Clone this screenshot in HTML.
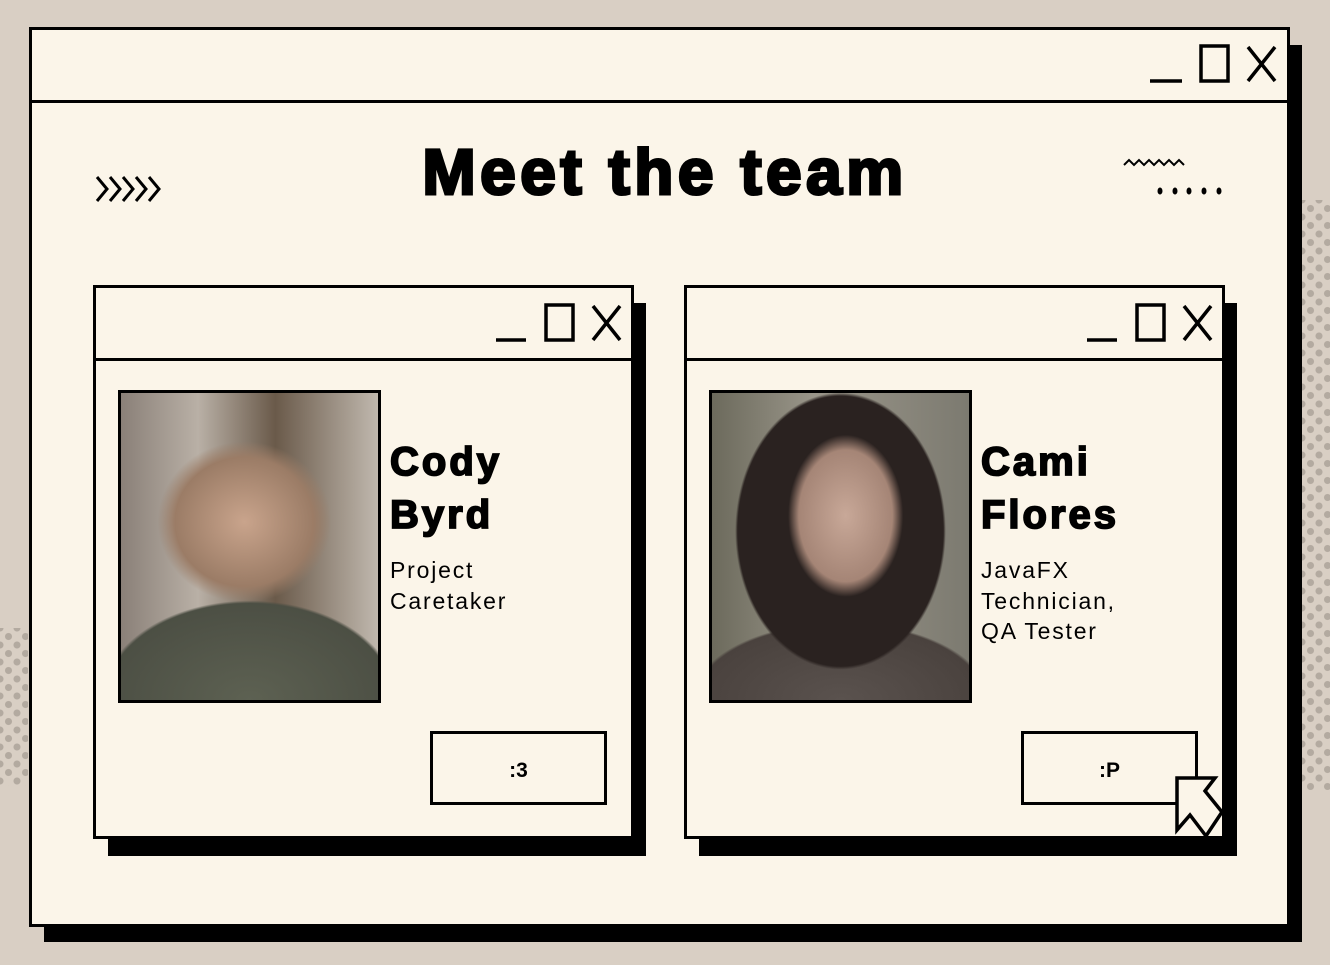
<!DOCTYPE html>
<html><head><style>
*{margin:0;padding:0;box-sizing:border-box}
body{width:1330px;height:965px;background:#d9cfc4;position:relative;overflow:hidden;font-family:"Liberation Sans",sans-serif;color:#000}
.dots{position:absolute;background-image:radial-gradient(circle,#b3aaa0 3.2px,transparent 3.8px),radial-gradient(circle,#b3aaa0 3.2px,transparent 3.8px);background-size:17px 17px;background-position:0 0,8.5px 8.5px}
.win{position:absolute;background:#fbf5e9;border:3px solid #000}
.sh{position:absolute;background:#000}
.bar{position:absolute;left:0;right:0;border-bottom:3px solid #000}
.title{position:absolute;left:0;width:100%;top:134px;text-align:center;font-weight:bold;font-size:64px;letter-spacing:4.5px;-webkit-text-stroke:3px #000;line-height:76px}
.name{position:absolute;font-weight:bold;font-size:40px;line-height:53px;-webkit-text-stroke:1.8px #000;letter-spacing:3px}
.role{position:absolute;font-size:23px;line-height:30.5px;letter-spacing:1.8px}
.photo{position:absolute;border:3px solid #000}
.btn{position:absolute;border:3px solid #000;background:#fbf5e9;font-weight:bold;font-size:21px;text-align:center;line-height:74px}
</style></head><body>
<div class="dots" style="left:1302px;top:200px;width:28px;height:590px"></div>
<div class="dots" style="left:0;top:628px;width:28px;height:158px"></div>

<div class="sh" style="left:44px;top:45px;width:1258px;height:897px"></div>
<div class="win" style="left:29px;top:27px;width:1261px;height:900px">
  <div class="bar" style="top:0;height:73px"></div>
</div>
<svg style="position:absolute;left:0;top:0" width="1330" height="965">
  <g fill="none" stroke="#000" stroke-width="3.5">
    <path d="M1150 81H1182"/><rect x="1201" y="46" width="27" height="35"/><path d="M1248 47L1275 81M1275 47L1248 81"/>
    <path d="M97 177L107 189L97 201M110 177L120 189L110 201M123 177L133 189L123 201M136 177L146 189L136 201M149 177L159 189L149 201" stroke-width="3"/>
    <path d="M1124 165l5-5 5 5 5-5 5 5 5-5 5 5 5-5 5 5 5-5 5 5 5-5 5 5" stroke-width="2"/>
  </g>
  <g fill="#000"><ellipse cx="1160" cy="191" rx="2.5" ry="3.5"/><ellipse cx="1175" cy="191" rx="2.5" ry="3.5"/><ellipse cx="1189" cy="191" rx="2.5" ry="3.5"/><ellipse cx="1204" cy="191" rx="2.5" ry="3.5"/><ellipse cx="1219" cy="191" rx="2.5" ry="3.5"/></g>
</svg>
<div class="title">Meet the team</div>

<!-- card 1 -->
<div class="sh" style="left:108px;top:303px;width:538px;height:553px"></div>
<div class="win" style="left:93px;top:285px;width:541px;height:554px"><div class="bar" style="top:0;height:73px"></div></div>
<svg style="position:absolute;left:0;top:0" width="1330" height="965"><g fill="none" stroke="#000" stroke-width="3.5">
<path d="M496 340H526"/><rect x="546" y="305" width="27" height="35"/><path d="M593 306L620 340M620 306L593 340"/>
</g></svg>
<div class="photo" style="left:118px;top:390px;width:263px;height:313px;background:radial-gradient(ellipse 45% 35% at 48% 42%,#c9a48c,#9b7c66 60%,transparent 75%),radial-gradient(ellipse 80% 45% at 50% 100%,#5d6152,#4c4f44 70%,transparent 72%),linear-gradient(90deg,#8a8078,#b9b0a6 30%,#6a5a4a 60%,#c0b8ae)"></div>
<div class="name" style="left:390px;top:436px">Cody<br>Byrd</div>
<div class="role" style="left:390px;top:555px">Project<br>Caretaker</div>
<div class="btn" style="left:430px;top:731px;width:177px;height:74px">:3</div>

<!-- card 2 -->
<div class="sh" style="left:699px;top:303px;width:538px;height:553px"></div>
<div class="win" style="left:684px;top:285px;width:541px;height:554px"><div class="bar" style="top:0;height:73px"></div></div>
<svg style="position:absolute;left:0;top:0" width="1330" height="965"><g fill="none" stroke="#000" stroke-width="3.5">
<path d="M1087 340H1117"/><rect x="1137" y="305" width="27" height="35"/><path d="M1184 306L1211 340M1211 306L1184 340"/>
</g></svg>
<div class="photo" style="left:709px;top:390px;width:263px;height:313px;background:radial-gradient(ellipse 28% 33% at 52% 40%,#c8a898,#a58576 65%,transparent 80%),radial-gradient(ellipse 50% 55% at 50% 45%,#2a2220,#2a2220 80%,transparent 82%),radial-gradient(ellipse 80% 35% at 50% 100%,#5a524e,#4a423e 70%,transparent 72%),linear-gradient(90deg,#6c6a5c,#9a968a 40%,#7c7a70)"></div>
<div class="name" style="left:981px;top:436px">Cami<br>Flores</div>
<div class="role" style="left:981px;top:555px">JavaFX<br>Technician,<br>QA Tester</div>
<div class="btn" style="left:1021px;top:731px;width:177px;height:74px">:P</div>
<svg style="position:absolute;left:0;top:0" width="1330" height="965"><path d="M1177 778H1215L1205 791L1222 812L1206 836L1190 815L1177 830Z" fill="#fbf5e9" stroke="#000" stroke-width="3.5" stroke-linejoin="miter"/></svg>
</body></html>
